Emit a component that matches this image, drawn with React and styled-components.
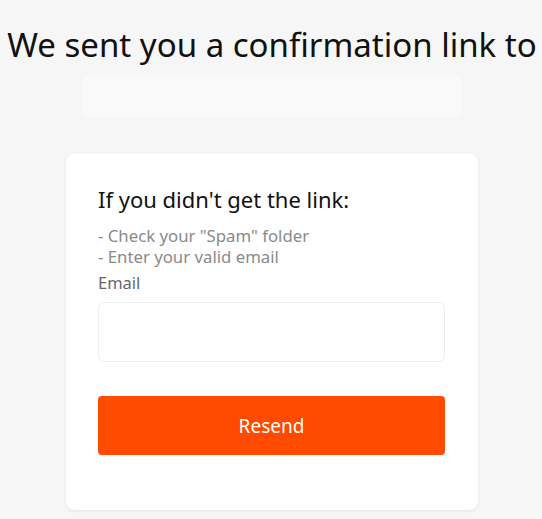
import styled, { createGlobalStyle } from "styled-components";

const GlobalStyle = createGlobalStyle`
    html, body {
        margin: 0;
        padding: 0;
        background: #f6f6f6;
        font-family: "Noto Sans", "Open Sans", sans-serif;
    }
    * {
        box-sizing: border-box;
    }
`;

const Page = styled.div`
    display: flex;
    flex-direction: column;
    align-items: center;
    min-height: 519px;
    padding: 25px 0 0 2px;
`;

const Title = styled.h1`
    margin: 0;
    font-size: 33px;
    font-weight: 400;
    line-height: 40px;
    color: #111;
    white-space: nowrap;
`;

const EmailBox = styled.div`
    width: 378px;
    height: 43px;
    margin-top: 10px;
    border-radius: 8px;
    background: #f9f9f9;
`;

const Card = styled.div`
    width: 412px;
    margin-top: 36px;
    padding: 30px 33px 55px 32px;
    background: #fff;
    border-radius: 8px;
    box-shadow: 0 1px 3px rgba(0, 0, 0, 0.08);
`;

const CardTitle = styled.h2`
    margin: 0;
    font-size: 22px;
    font-weight: 400;
    line-height: 30px;
    color: #111;
`;

const Hints = styled.div`
    margin-top: 11px;
    font-size: 16.75px;
    line-height: 21px;
    color: #8a8a8a;
`;

const Label = styled.label`
    display: block;
    margin-top: 6px;
    font-size: 16.5px;
    line-height: 20px;
    color: #666;
`;

const Input = styled.input`
    display: block;
    width: 100%;
    height: 60px;
    margin-top: 9px;
    border: 1px solid #eeeeee;
    border-radius: 6px;
    background: #fff;
    outline: none;
    padding: 0 14px;
    font: inherit;
`;

const Button = styled.button`
    display: block;
    width: 100%;
    height: 59px;
    margin-top: 34px;
    border: none;
    border-radius: 4px;
    background: #ff4a00;
    color: #fff;
    font-family: inherit;
    font-size: 19px;
    cursor: pointer;
`;

export default function App() {
    return (
        <>
            <GlobalStyle />
            <Page>
                <Title>We sent you a confirmation link to</Title>
                <EmailBox />
                <Card>
                    <CardTitle>If you didn't get the link:</CardTitle>
                    <Hints>
                        - Check your "Spam" folder
                        <br />
                        - Enter your valid email
                    </Hints>
                    <Label htmlFor="email">Email</Label>
                    <Input id="email" type="email" />
                    <Button>Resend</Button>
                </Card>
            </Page>
        </>
    );
}
